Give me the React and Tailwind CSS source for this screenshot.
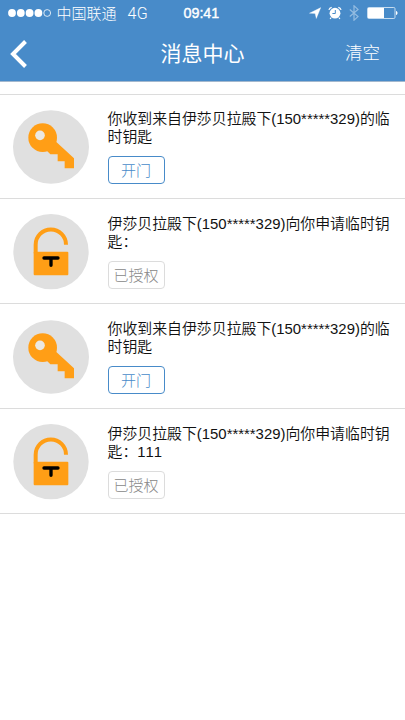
import React from 'react';
import clsx from 'clsx';

const messages = [
  { id: 1, type: 'key', text: '你收到来自伊莎贝拉殿下(150*****329)的临时钥匙', action: '开门' },
  { id: 2, type: 'lock', text: '伊莎贝拉殿下(150*****329)向你申请临时钥匙：', action: '已授权' },
  { id: 3, type: 'key', text: '你收到来自伊莎贝拉殿下(150*****329)的临时钥匙', action: '开门' },
  { id: 4, type: 'lock', text: '伊莎贝拉殿下(150*****329)向你申请临时钥匙：111', action: '已授权' },
];

const KeyIcon = () => (
  <svg viewBox="0 0 228 228" className="block h-[76px] w-[76px] shrink-0">
    <ellipse cx="114" cy="114" rx="114" ry="110.5" fill="#e0e0e0" />
    <path
      d="M130 99L183 148V178H155V157H134V136H112L100 124Z"
      fill="#ff9e16"
    />
    <circle cx="89" cy="86" r="43" fill="#ff9e16" />
    <circle cx="81" cy="79" r="14.5" fill="#ebe8e3" />
  </svg>
);

const LockIcon = () => (
  <svg viewBox="0 0 228 228" className="block h-[76px] w-[76px] shrink-0">
    <circle cx="114" cy="113" r="113" fill="#e0e0e0" />
    <path d="M68 118V92A45.5 45.5 0 0 1 159 92" fill="none" stroke="#ff9e16" strokeWidth="12" />
    <rect x="62" y="113" width="104" height="71" rx="3" fill="#ff9e16" />
    <path d="M93 132H135M114 132V154" fill="none" stroke="#000" strokeWidth="10" strokeLinecap="round" />
  </svg>
);

const StatusBar = () => (
  <div className="flex h-[26px] items-center text-[15px] leading-none">
    <svg viewBox="0 0 44 10" className="ml-2 h-[10px] w-[44px] shrink-0" fill="#fff">
      <circle cx="4" cy="5" r="3.9" />
      <circle cx="12.8" cy="5" r="3.9" />
      <circle cx="21.6" cy="5" r="3.9" />
      <circle cx="30.4" cy="5" r="3.9" />
      <circle cx="39.2" cy="5" r="3.4" fill="none" stroke="#fff" strokeWidth="0.8" />
    </svg>
    <span className="ml-[4.5px] w-[71px] font-light">中国联通</span>
    <span className="w-[56px] pt-0.5 font-['Roboto',sans-serif] text-[16px] font-light tracking-[0.4px]">4G</span>
    <span className="w-[125.5px] text-[14.3px] [-webkit-text-stroke:0.4px_white]">09:41</span>
    <svg viewBox="0 0 12 12" className="h-3 w-3 shrink-0">
      <path d="M11.8 0.6L7.3 11.6L6.1 6.4L0.4 6.2Z" fill="#fff" stroke="#fff" strokeWidth="0.3" />
    </svg>
    <svg viewBox="0 0 14 14" className="ml-[7px] h-[14px] w-[14px] shrink-0">
      <circle cx="7" cy="7.2" r="5.4" fill="#fff" />
      <path d="M0.9 3.9A4 4 0 0 1 3.7 1.3M10.3 1.3A4 4 0 0 1 13.1 3.9M3.2 11.5L2.1 13M10.8 11.5L11.9 13" fill="none" stroke="#fff" strokeWidth="1.2" />
      <path d="M7.3 4V7.5H4.4" fill="none" stroke="#488bc9" strokeWidth="1" />
    </svg>
    <svg viewBox="0 0 10 16" className="ml-[7px] h-4 w-[10px] shrink-0">
      <path d="M0.8 4.5L9 11.6L5 15.2V0.8L9 4.4L0.8 11.5" fill="none" stroke="#94bce1" strokeWidth="1.2" />
    </svg>
    <svg viewBox="0 0 32 12" className="ml-[8px] h-3 w-8 shrink-0">
      <rect x="0.5" y="0.5" width="27.5" height="11" rx="1.2" fill="none" stroke="#d5e5f4" strokeWidth="0.9" />
      <rect x="1" y="1" width="16" height="10" fill="#fff" />
      <path d="M29 4C31 4.4 31 7.6 29 8Z" fill="#fff" />
    </svg>
  </div>
);

const Header = () => (
  <header className="h-[82px] border-b border-[#a3b8ce] bg-[#488bc9] text-white">
    <StatusBar />
    <div className="flex h-[55px] items-center justify-between pl-[10px] pr-[25px]">
      <button className="w-[50px]" aria-label="返回">
        <svg viewBox="0 0 18 28" className="h-7 w-[18px]">
          <path d="M15.5 1.5L3 14L15.5 26.5" fill="none" stroke="#fff" strokeWidth="4" />
        </svg>
      </button>
      <h1 className="text-[21px] leading-none">消息中心</h1>
      <button className="text-[17.5px] leading-none font-light">清空</button>
    </div>
  </header>
);

const MessageRow = ({ message, first }) => {
  const isKey = message.type === 'key';
  return (
    <li
      className={clsx(
        'flex border-b border-[#dcdcdc] pl-[12.5px]',
        first ? 'h-[104px] pt-[14px]' : 'h-[105px] pt-[15px]'
      )}
    >
      {isKey ? <KeyIcon /> : <LockIcon />}
      <div className="ml-[19px] w-[284px]">
        <p className="mt-px h-9 text-[14.9px] leading-[18px] font-[350] break-all text-[#111] [font-kerning:none]">
          {message.text}
        </p>
        <button
          className={clsx(
            'mt-[10px] flex h-7 w-[57px] items-center justify-center rounded border text-[15px] leading-none font-light',
            isKey ? 'border-[#488bc9] text-[#488bc9]' : 'border-[#dcdcdc] text-[#888888]'
          )}
        >
          {message.action}
        </button>
      </div>
    </li>
  );
};

const App = () => (
  <div className="h-[720px] w-[405px] overflow-hidden bg-white font-['Liberation_Sans','Noto_Sans_CJK_SC',sans-serif]">
    <Header />
    <ul className="mt-3 border-t border-[#dcdcdc]">
      {messages.map((message, index) => (
        <MessageRow key={message.id} message={message} first={index === 0} />
      ))}
    </ul>
  </div>
);

export default App;
